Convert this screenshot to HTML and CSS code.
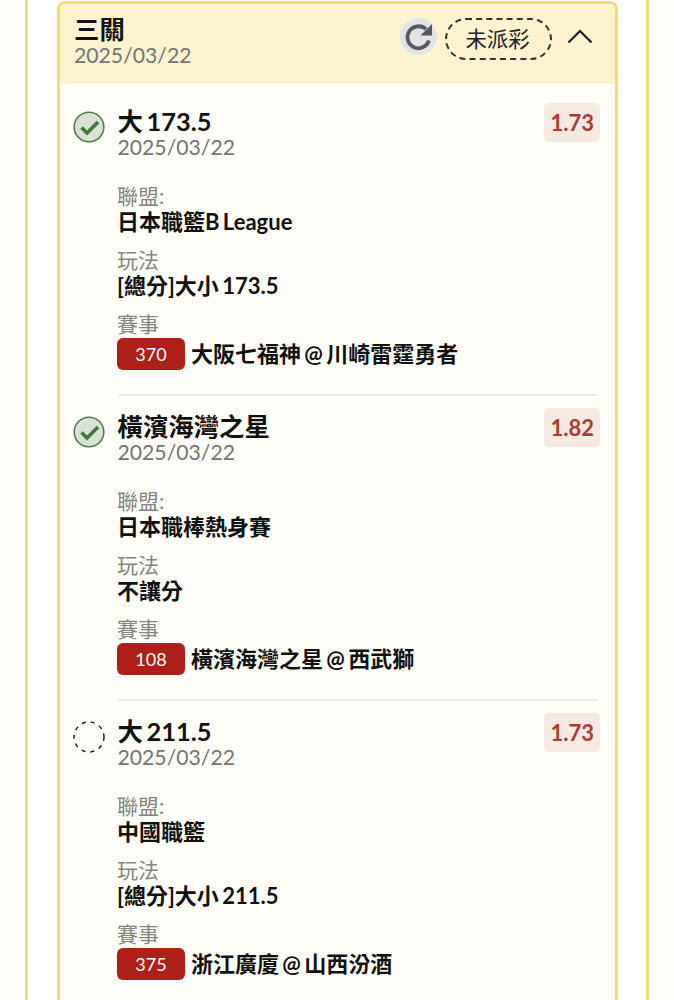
FILE: index.html
```html
<!DOCTYPE html>
<html lang="zh-Hant">
<head>
    <meta charset="UTF-8">
    <meta name="viewport" content="width=device-width, initial-scale=1.0">
    <title>三關</title>
    <link rel="stylesheet" href="styles.css">
</head>
<body>

    <div class="panel">
        <div class="card">

            <!-- 標題 -->
            <div class="card-head">
                <div class="head-text">
                    <div class="title">三關</div>
                    <div class="date">2025/03/22</div>
                </div>
                <button class="refresh">
                    <svg viewBox="0 0 37 37" width="37" height="37">
                        <path d="M29 22.5A11 11 0 1 1 26 11.2" fill="none" stroke="#55585f" stroke-width="3.8"/>
                        <path d="M32 6v11.5H20.5z" fill="#55585f"/>
                    </svg>
                </button>
                <span class="status">未派彩</span>
                <svg class="chevron" viewBox="0 0 28 18" width="28" height="18">
                    <path d="M2.5 15.5 14 4l11.5 11.5" fill="none" stroke="#1c1c1c" stroke-width="2.2"/>
                </svg>
            </div>

            <!-- 第一場 -->
            <div class="leg">
                <div class="leg-head">
                    <svg class="mark" viewBox="0 0 32 32" width="32" height="32">
                        <circle cx="16" cy="16" r="14.8" fill="#d9e3d5" stroke="#53794f" stroke-width="1.6"/>
                        <path d="M8.5 16.5l5.5 5.5L25 11" fill="none" stroke="#3f7a3b" stroke-width="3.6"/>
                    </svg>
                    <div class="leg-text">
                        <div class="title">大 173.5</div>
                        <div class="date">2025/03/22</div>
                    </div>
                    <span class="odds">1.73</span>
                </div>
                <div class="field">
                    <div class="label">聯盟:</div>
                    <div class="value">日本職籃B League</div>
                </div>
                <div class="field">
                    <div class="label">玩法</div>
                    <div class="value">[總分]大小 173.5</div>
                </div>
                <div class="field">
                    <div class="label">賽事</div>
                    <div class="match"><span class="num">370</span><span class="value">大阪七福神 @ 川崎雷霆勇者</span></div>
                </div>
            </div>
            <hr class="sep">

            <!-- 第二場 -->
            <div class="leg">
                <div class="leg-head">
                    <svg class="mark" viewBox="0 0 32 32" width="32" height="32">
                        <circle cx="16" cy="16" r="14.8" fill="#d9e3d5" stroke="#53794f" stroke-width="1.6"/>
                        <path d="M8.5 16.5l5.5 5.5L25 11" fill="none" stroke="#3f7a3b" stroke-width="3.6"/>
                    </svg>
                    <div class="leg-text">
                        <div class="title">橫濱海灣之星</div>
                        <div class="date">2025/03/22</div>
                    </div>
                    <span class="odds">1.82</span>
                </div>
                <div class="field">
                    <div class="label">聯盟:</div>
                    <div class="value">日本職棒熱身賽</div>
                </div>
                <div class="field">
                    <div class="label">玩法</div>
                    <div class="value">不讓分</div>
                </div>
                <div class="field">
                    <div class="label">賽事</div>
                    <div class="match"><span class="num">108</span><span class="value">橫濱海灣之星 @ 西武獅</span></div>
                </div>
            </div>
            <hr class="sep">

            <!-- 第三場 -->
            <div class="leg">
                <div class="leg-head">
                    <svg class="mark" viewBox="0 0 32 32" width="32" height="32">
                        <circle cx="16" cy="16" r="15" fill="none" stroke="#222" stroke-width="1.5" stroke-dasharray="4 5"/>
                    </svg>
                    <div class="leg-text">
                        <div class="title">大 211.5</div>
                        <div class="date">2025/03/22</div>
                    </div>
                    <span class="odds">1.73</span>
                </div>
                <div class="field">
                    <div class="label">聯盟:</div>
                    <div class="value">中國職籃</div>
                </div>
                <div class="field">
                    <div class="label">玩法</div>
                    <div class="value">[總分]大小 211.5</div>
                </div>
                <div class="field">
                    <div class="label">賽事</div>
                    <div class="match"><span class="num">375</span><span class="value">浙江廣廈 @ 山西汾酒</span></div>
                </div>
            </div>

        </div>
    </div>

</body>
</html>
```

FILE: styles.css
```css
body {
    margin: 0;
    height: 1000px;
    overflow: hidden;
    background-color: #fffef8;
    font-family: Lato, "Noto Sans CJK TC", sans-serif;
    color: #111;
}

.panel {
    margin: 0 25px;
    height: 1000px;
    padding: 1px 28px 0 29px;
    border-left: 3px solid #f3dc72;
    border-right: 3px solid #f3dc72;
    background-color: #fff;
}

.card {
    border: 3px solid #f3dc72;
    border-radius: 8px;
    background-color: #fffef8;
}

.card-head {
    display: flex;
    align-items: flex-start;
    box-sizing: border-box;
    height: 80px;
    margin-bottom: 7px;
    padding: 14px 21px 0 14px;
    background-color: #fdf3cf;
    border-radius: 5px 5px 0 0;
}

.head-text {
    flex: 1;
    margin-top: -3px;
}

.title {
    font-size: 25.4px;
    font-weight: 700;
    line-height: 28px;
    word-spacing: -2.5px;
}

.date {
    font-size: 21.2px;
    line-height: 25px;
    color: #757571;
}

.refresh {
    width: 37px;
    height: 37px;
    padding: 0;
    border: 0;
    border-radius: 50%;
    background-color: #e2e3e4;
}

.refresh svg {
    display: block;
}

.status {
    margin: 0 14px 0 8px;
    width: 107px;
    height: 42px;
    box-sizing: border-box;
    border: 2px dashed #333;
    border-radius: 21px;
    padding-right: 2px;
    font-size: 21.4px;
    line-height: 39px;
    text-align: center;
    color: #222;
}

.chevron {
    margin-top: 9px;
}

.leg {
    margin: 0 15px 0 13px;
    padding: 12px 0 24px;
}

.sep {
    height: 2px;
    margin: 0 18px 0 58px;
    border: 0;
    background-color: #eceae4;
}

.leg-head {
    display: flex;
    align-items: flex-start;
    margin-bottom: 23px;
}

.mark {
    margin-top: 8px;
    margin-right: 12.5px;
    flex: none;
}

.leg-text {
    flex: 1;
    margin-top: 4px;
}

.odds {
    padding: 0 6px;
    height: 39px;
    line-height: 40px;
    border-radius: 5px;
    background-color: #f5e9e2;
    color: #ad3a34;
    font-size: 22px;
    font-weight: 700;
}

.field {
    margin: 0 0 12px 44px;
}

.field:last-child {
    margin-bottom: 0;
}

.label {
    font-size: 21px;
    line-height: 26px;
    color: #85857f;
}

.value {
    font-size: 22px;
    font-weight: 700;
    line-height: 26px;
    word-spacing: -2px;
}

.match {
    display: flex;
    align-items: center;
    gap: 6px;
    margin-top: 1px;
}

.num {
    width: 68px;
    height: 32px;
    line-height: 32px;
    border-radius: 6px;
    background-color: #ad2018;
    color: #fff;
    font-size: 18px;
    text-align: center;
}
```
